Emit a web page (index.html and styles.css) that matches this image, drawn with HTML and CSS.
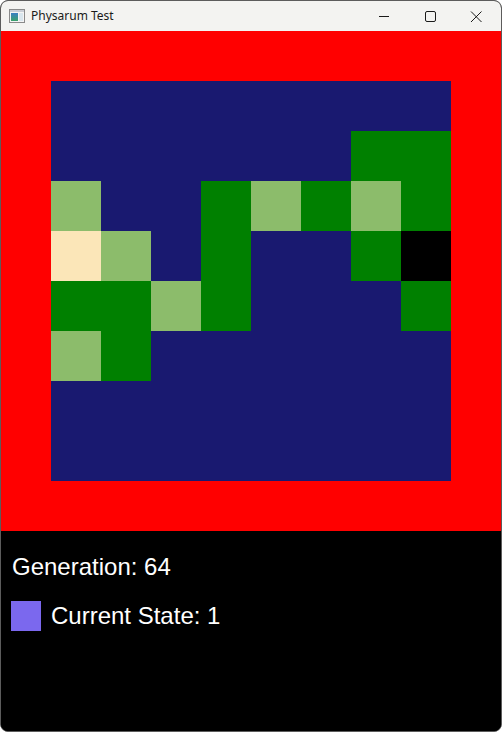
FILE: index.html
```html
<!DOCTYPE html>
<html>
<head>
<meta charset="utf-8">
<link rel="stylesheet" href="styles.css">
</head>
<body>
<div class="window">
  <div class="titlebar">
    <svg class="appicon" width="16" height="14" viewBox="0 0 16 14">
      <rect x="0.5" y="0.5" width="15" height="13" fill="#f4f4f4" stroke="#8a8a8a"/>
      <rect x="1" y="1" width="14" height="2" fill="#c9ced6"/>
      <defs>
        <linearGradient id="g" x1="0" y1="0" x2="0" y2="1">
          <stop offset="0" stop-color="#3b7fc4"/>
          <stop offset="1" stop-color="#3aa26a"/>
        </linearGradient>
      </defs>
      <rect x="2" y="4" width="7" height="8" fill="url(#g)"/>
      <rect x="10" y="4" width="4" height="8" fill="#d9e6ee"/>
    </svg>
    <span class="title">Physarum Test</span>
    <div class="controls">
      <svg class="ctl" width="46" height="30" viewBox="0 0 46 30"><path d="M18 15.5h10" stroke="#1a1a1a" stroke-width="1"/></svg>
      <svg class="ctl" width="46" height="30" viewBox="0 0 46 30"><rect x="18.5" y="10.5" width="10" height="10" rx="1.5" fill="none" stroke="#1a1a1a" stroke-width="1"/></svg>
      <svg class="ctl" width="46" height="30" viewBox="0 0 46 30"><path d="M18 10.5l10.5 10.5M28.5 10.5L18 21" stroke="#1a1a1a" stroke-width="1"/></svg>
    </div>
  </div>
  <div class="canvas">
    <div class="board">
      <div class="c n"></div><div class="c n"></div><div class="c n"></div><div class="c n"></div><div class="c n"></div><div class="c n"></div><div class="c n"></div><div class="c n"></div>
      <div class="c n"></div><div class="c n"></div><div class="c n"></div><div class="c n"></div><div class="c n"></div><div class="c n"></div><div class="c g"></div><div class="c g"></div>
      <div class="c l"></div><div class="c n"></div><div class="c n"></div><div class="c g"></div><div class="c l"></div><div class="c g"></div><div class="c l"></div><div class="c g"></div>
      <div class="c w"></div><div class="c l"></div><div class="c n"></div><div class="c g"></div><div class="c n"></div><div class="c n"></div><div class="c g"></div><div class="c k"></div>
      <div class="c g"></div><div class="c g"></div><div class="c l"></div><div class="c g"></div><div class="c n"></div><div class="c n"></div><div class="c n"></div><div class="c g"></div>
      <div class="c l"></div><div class="c g"></div><div class="c n"></div><div class="c n"></div><div class="c n"></div><div class="c n"></div><div class="c n"></div><div class="c n"></div>
      <div class="c n"></div><div class="c n"></div><div class="c n"></div><div class="c n"></div><div class="c n"></div><div class="c n"></div><div class="c n"></div><div class="c n"></div>
      <div class="c n"></div><div class="c n"></div><div class="c n"></div><div class="c n"></div><div class="c n"></div><div class="c n"></div><div class="c n"></div><div class="c n"></div>
    </div>
  </div>
  <div class="info">
    <div class="gen">Generation: 64</div>
    <div class="state">
      <div class="swatch"></div>
      <span>Current State: 1</span>
    </div>
  </div>
</div>
</body>
</html>
```
FILE: styles.css
```css
html, body {
  margin: 0;
  padding: 0;
  background: #ffffff;
}
.window {
  width: 500px;
  height: 730px;
  border: 1px solid #5c5c5c;
  border-radius: 8px;
  overflow: hidden;
  display: flex;
  flex-direction: column;
  background: #000;
}
.titlebar {
  height: 30px;
  flex: none;
  background: #f3f3f1;
  display: flex;
  align-items: center;
  font-family: "Segoe UI", "Noto Sans", "Liberation Sans", sans-serif;
  font-size: 12px;
  color: #1a1a1a;
}
.appicon {
  margin-left: 8px;
  margin-top: -1px;
  flex: none;
}
.title {
  margin-left: 6px;
  margin-top: -1px;
}
.controls {
  margin-left: auto;
  display: flex;
  margin-right: 2px;
}
.ctl {
  display: block;
}
.canvas {
  width: 400px;
  height: 400px;
  flex: none;
  padding: 50px;
  background: #ff0000;
}
.board {
  display: grid;
  grid-template-columns: repeat(8, 50px);
  grid-template-rows: repeat(8, 50px);
}
.n { background: #191970; }
.g { background: #008000; }
.l { background: #8cbc6b; }
.w { background: #fbe6b8; }
.k { background: #000000; }
.info {
  flex: 1;
  background: #000;
  color: #fff;
  font-family: "Liberation Sans", Arial, sans-serif;
  font-size: 24px;
  padding: 22px 0 0 10px;
  display: flex;
  flex-direction: column;
  gap: 20px;
}
.gen {
  line-height: 28px;
  padding-left: 1px;
}
.state {
  display: flex;
  align-items: center;
  gap: 10px;
  line-height: 30px;
}
.swatch {
  width: 30px;
  height: 30px;
  background: #7b68ee;
}
```
